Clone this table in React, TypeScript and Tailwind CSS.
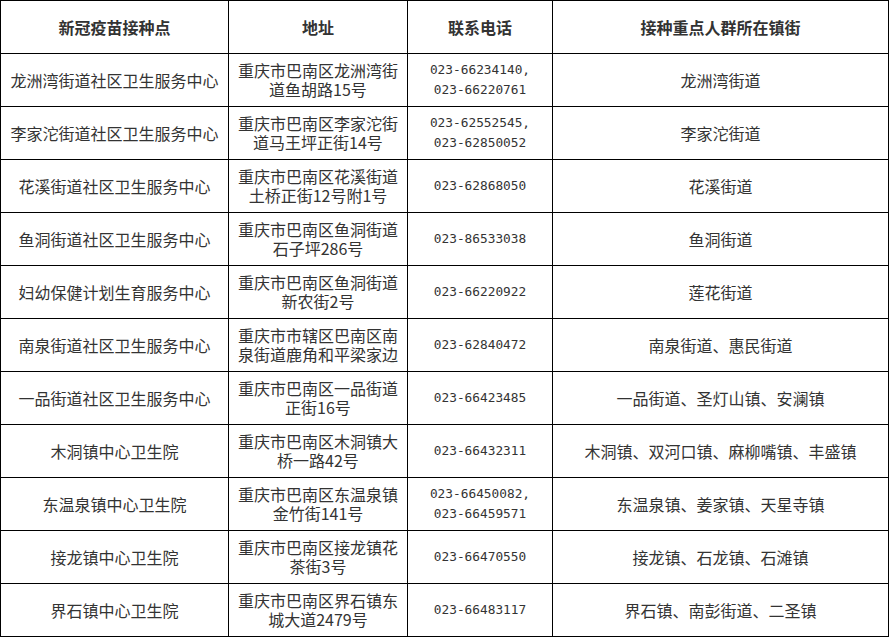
const rows: { site: string; addr: string[]; phone: string[]; area: string }[] = [
  { site: "龙洲湾街道社区卫生服务中心", addr: ["重庆市巴南区龙洲湾街", "道鱼胡路15号"], phone: ["023-66234140,", "023-66220761"], area: "龙洲湾街道" },
  { site: "李家沱街道社区卫生服务中心", addr: ["重庆市巴南区李家沱街", "道马王坪正街14号"], phone: ["023-62552545,", "023-62850052"], area: "李家沱街道" },
  { site: "花溪街道社区卫生服务中心", addr: ["重庆市巴南区花溪街道", "土桥正街12号附1号"], phone: ["023-62868050"], area: "花溪街道" },
  { site: "鱼洞街道社区卫生服务中心", addr: ["重庆市巴南区鱼洞街道", "石子坪286号"], phone: ["023-86533038"], area: "鱼洞街道" },
  { site: "妇幼保健计划生育服务中心", addr: ["重庆市巴南区鱼洞街道", "新农街2号"], phone: ["023-66220922"], area: "莲花街道" },
  { site: "南泉街道社区卫生服务中心", addr: ["重庆市市辖区巴南区南", "泉街道鹿角和平梁家边"], phone: ["023-62840472"], area: "南泉街道、惠民街道" },
  { site: "一品街道社区卫生服务中心", addr: ["重庆市巴南区一品街道", "正街16号"], phone: ["023-66423485"], area: "一品街道、圣灯山镇、安澜镇" },
  { site: "木洞镇中心卫生院", addr: ["重庆市巴南区木洞镇大", "桥一路42号"], phone: ["023-66432311"], area: "木洞镇、双河口镇、麻柳嘴镇、丰盛镇" },
  { site: "东温泉镇中心卫生院", addr: ["重庆市巴南区东温泉镇", "金竹街141号"], phone: ["023-66450082,", "023-66459571"], area: "东温泉镇、姜家镇、天星寺镇" },
  { site: "接龙镇中心卫生院", addr: ["重庆市巴南区接龙镇花", "茶街3号"], phone: ["023-66470550"], area: "接龙镇、石龙镇、石滩镇" },
  { site: "界石镇中心卫生院", addr: ["重庆市巴南区界石镇东", "城大道2479号"], phone: ["023-66483117"], area: "界石镇、南彭街道、二圣镇" },
]

const cell = "flex flex-col items-center justify-center bg-white text-center"

export default function App() {
  return (
    <div className="min-h-screen bg-white font-['Noto_Sans_CJK_SC',sans-serif] text-[16px] text-[#333]">
      <div className="grid w-[889px] grid-cols-[227px_178px_144px_335px] auto-rows-[52px] gap-px border border-black bg-black">
        <div className={`${cell} font-bold`}>新冠疫苗接种点</div>
        <div className={`${cell} font-bold`}>地址</div>
        <div className={`${cell} font-bold`}>联系电话</div>
        <div className={`${cell} font-bold`}>接种重点人群所在镇街</div>
        {rows.map((r) => (
          <Row key={r.site} {...r} />
        ))}
      </div>
    </div>
  )
}

function Row({ site, addr, phone, area }: { site: string; addr: string[]; phone: string[]; area: string }) {
  return (
    <>
      <div className={cell}>{site}</div>
      <div className={`${cell} leading-[19px]`}>
        {addr.map((line) => (
          <span key={line}>{line}</span>
        ))}
      </div>
      <div className={`${cell} font-['DejaVu_Sans_Mono',monospace] text-[12.8px] leading-[20px]`}>
        {phone.map((line) => (
          <span key={line}>{line}</span>
        ))}
      </div>
      <div className={cell}>{area}</div>
    </>
  )
}
